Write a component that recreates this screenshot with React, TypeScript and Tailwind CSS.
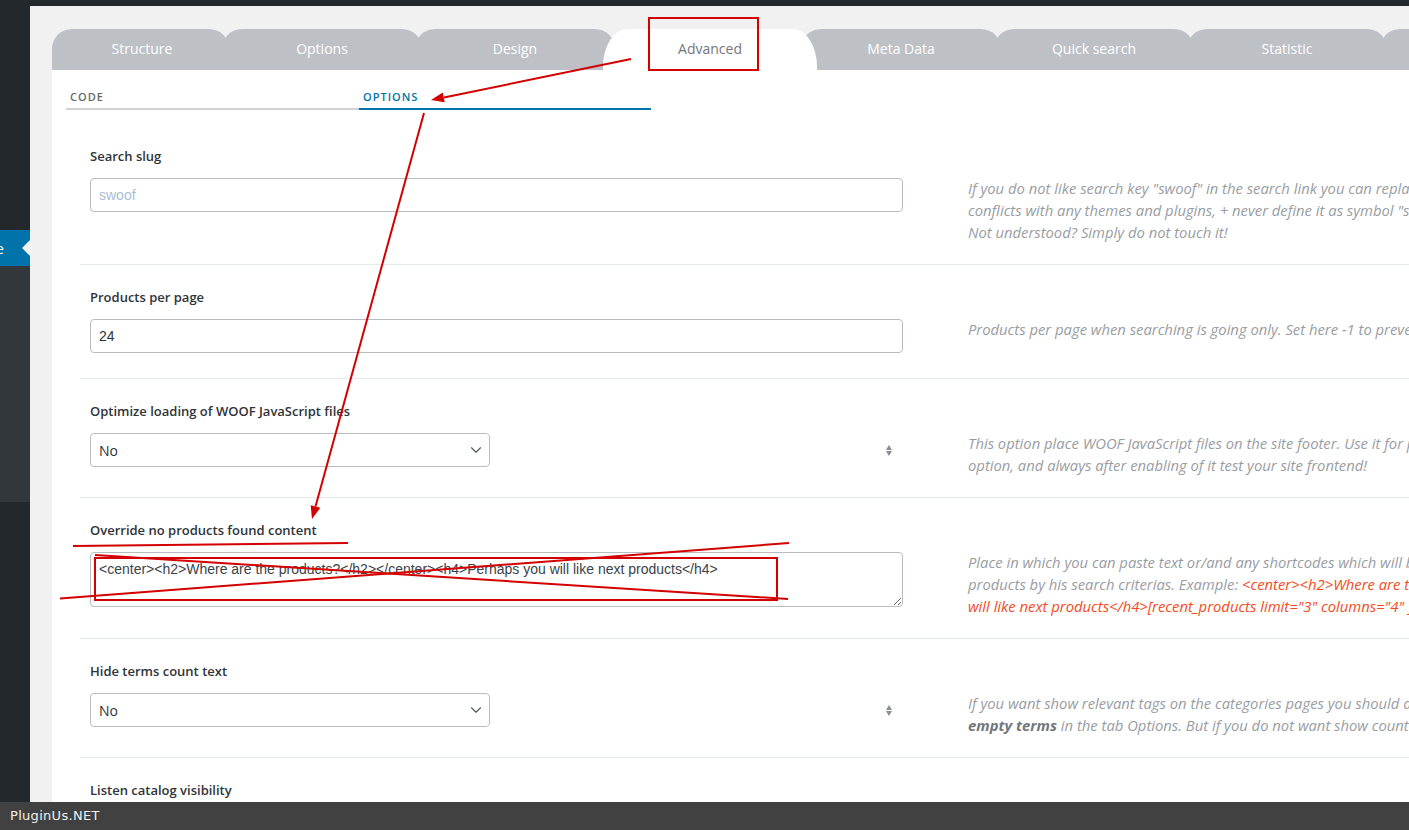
import { ChevronDown } from 'lucide-react';

const tabs = [
  { name: 'Structure', cls: 'w-[177px] pl-[3px]' },
  { name: 'Options', cls: 'w-[200px] -ml-[7px]' },
  { name: 'Design', cls: 'w-[200px] -ml-[7px]' },
  { name: 'Advanced', cls: 'w-[214px] -ml-[12px]', active: true },
  { name: 'Meta Data', cls: 'w-[200px] -ml-[16px]' },
  { name: 'Quick search', cls: 'w-[200px] -ml-[7px]' },
  { name: 'Statistic', cls: 'w-[200px] -ml-[7px]' },
  { name: '', cls: 'w-[200px] -ml-[7px]' },
];

function Label({ children }: { children: React.ReactNode }) {
  return (
    <div className="h-[20px] mb-[12px] text-[13px] leading-[20px] font-semibold text-[#2f3438]">
      {children}
    </div>
  );
}

function Spinner() {
  return (
    <div className="flex flex-col items-center gap-[1px] mr-[11px]">
      <div className="w-0 h-0 border-x-[3.5px] border-x-transparent border-b-[5px] border-b-[#8a8f94]" />
      <div className="w-0 h-0 border-x-[3.5px] border-x-transparent border-t-[5px] border-t-[#8a8f94]" />
    </div>
  );
}

function SelectBox() {
  return (
    <div className="w-[400px] h-[34px] border border-[#b8bcc0] rounded-[4px] bg-white flex items-center justify-between pl-[8px] pr-[4px] text-[14px] text-[#2c3338]">
      <span>No</span>
      <ChevronDown size={18} strokeWidth={1.5} className="text-[#50575e]" />
    </div>
  );
}

function Row({
  label,
  first,
  left,
  desc,
}: {
  label: string;
  first?: boolean;
  left: React.ReactNode;
  desc?: React.ReactNode;
}) {
  return (
    <div className={`flex ${first ? '' : 'border-t border-[#e4e9ee]'}`}>
      <div className="w-[823px] shrink-0 pl-[10px] pt-[22px] pb-[25px]">
        <Label>{label}</Label>
        {left}
      </div>
      {desc && (
        <div className="ml-[65px] pt-[53px] pb-[21px] text-[14.8px] leading-[22px] italic text-[#999da2] whitespace-nowrap">
          {desc}
        </div>
      )}
    </div>
  );
}

export default function App() {
  return (
    <div className="relative w-[1409px] h-[830px] overflow-hidden flex flex-col bg-[#f1f1f1] font-['Open_Sans',sans-serif]">
      <div className="h-[6px] shrink-0 bg-[#23282d]" />

      <div className="flex flex-1 min-h-0">
        {/* admin sidebar */}
        <div className="w-[30px] shrink-0 flex flex-col bg-[#23282d]">
          <div className="h-[224px]" />
          <div className="relative h-[36px] bg-[#0073aa] flex items-center overflow-hidden">
            <span className="-ml-[4px] text-[14px] text-white">e</span>
            <div className="absolute right-0 top-[10px] w-0 h-0 border-y-[8px] border-y-transparent border-r-[8px] border-r-[#f1f1f1]" />
          </div>
          <div className="h-[236px] bg-[#32373c]" />
        </div>

        {/* main */}
        <div className="flex-1 min-w-0 pl-[22px] pt-[23px] flex flex-col">
          <div className="flex h-[41px] shrink-0">
            {tabs.map((t) => (
              <div
                key={t.name + t.cls}
                className={`${t.cls} shrink-0 h-[41px] flex items-center justify-center text-[14px] pb-[2px] ${
                  t.active
                    ? 'relative z-10 bg-white text-[#72777c] rounded-tl-[24px_38px] rounded-tr-[24px_38px]'
                    : 'bg-[#bdc1c6] text-white rounded-tl-[20px] rounded-tr-[20px]'
                }`}
              >
                {t.name}
              </div>
            ))}
          </div>

          <div className="flex-1 bg-white min-w-[1500px]">
            {/* sub tabs */}
            <div className="flex px-[14px] pt-[19px]">
              <div className="w-[293px] pl-[4px] pb-[3px] border-b-2 border-[#cfd1d3] text-[11px] leading-[16px] font-semibold tracking-[1px] text-[#646970]">
                CODE
              </div>
              <div className="w-[292px] pl-[4px] pb-[3px] border-b-2 border-[#0073aa] text-[11px] leading-[16px] font-semibold tracking-[1px] text-[#0073aa]">
                OPTIONS
              </div>
            </div>

            <div className="ml-[28px] mt-[14px]">
              <Row
                first
                label="Search slug"
                left={
                  <div className="h-[34px] w-[813px] border border-[#b8bcc0] rounded-[4px] flex items-center px-[8px] font-['Liberation_Sans',sans-serif] text-[14px] text-[#a9bdd4]">
                    swoof
                  </div>
                }
                desc={
                  <>
                    If you do not like search key "swoof" in the search link you can replace it by your own word. But be care to avoid
                    <br />
                    conflicts with any themes and plugins, + never define it as symbol "s".
                    <br />
                    Not understood? Simply do not touch it!
                  </>
                }
              />
              <Row
                label="Products per page"
                left={
                  <div className="h-[34px] w-[813px] border border-[#b8bcc0] rounded-[4px] flex items-center px-[8px] font-['Liberation_Sans',sans-serif] text-[14px] text-[#2c3338]">
                    24
                  </div>
                }
                desc={<>Products per page when searching is going only. Set here -1 to prevent pagination managing from here!</>}
              />
              <Row
                label="Optimize loading of WOOF JavaScript files"
                left={
                  <div className="flex items-center justify-between w-[813px]">
                    <SelectBox />
                    <Spinner />
                  </div>
                }
                desc={
                  <>
                    This option place WOOF JavaScript files on the site footer. Use it for page loading optimization. Be careful in this
                    <br />
                    option, and always after enabling of it test your site frontend!
                  </>
                }
              />
              <Row
                label="Override no products found content"
                left={
                  <textarea
                    readOnly
                    defaultValue="<center><h2>Where are the products?</h2></center><h4>Perhaps you will like next products</h4>"
                    className="block w-[813px] h-[55px] border border-[#b8bcc0] rounded-[4px] px-[8px] py-[8px] font-['Liberation_Sans',sans-serif] text-[14px] leading-[16px] text-[#3c434a] outline-none"
                  />
                }
                desc={
                  <>
                    Place in which you can paste text or/and any shortcodes which will be displayed when customer will not find any
                    <br />
                    products by his search criterias. Example:{' '}
                    <span className="text-[#f44b22]">&lt;center&gt;&lt;h2&gt;Where are the products?&lt;/h2&gt;&lt;/center&gt;&lt;h4&gt;Perhaps you</span>
                    <br />
                    <span className="text-[#f44b22]">will like next products&lt;/h4&gt;[recent_products limit="3" columns="4" ]</span>
                  </>
                }
              />
              <Row
                label="Hide terms count text"
                left={
                  <div className="flex items-center justify-between w-[813px]">
                    <SelectBox />
                    <Spinner />
                  </div>
                }
                desc={
                  <>
                    If you want show relevant tags on the categories pages you should activate show count, dynamic recount and hide
                    <br />
                    <b className="font-bold text-[#72777c]">empty terms</b> in the tab Options. But if you do not want show count (number) text near each term - set Yes here.
                  </>
                }
              />
              <Row label="Listen catalog visibility" left={<div className="h-[34px]" />} />
            </div>
          </div>
        </div>
      </div>

      <div className="h-[28px] shrink-0 bg-[#414141] flex items-center pl-[10px] font-['DejaVu_Sans',sans-serif] text-[13px] tracking-[0.3px] text-[#f0f0f0]">
        PluginUs.NET
      </div>

      {/* red annotations */}
      <svg className="absolute inset-0 z-50 pointer-events-none" width="1409" height="830" viewBox="0 0 1409 830">
        <g stroke="#d40000" strokeWidth="2" fill="none">
          <rect x="649" y="18" width="109" height="52" />
          <line x1="631" y1="59" x2="444" y2="97.5" />
          <line x1="424" y1="113" x2="315.5" y2="506.5" />
          <line x1="73" y1="546" x2="348" y2="543" />
          <rect x="95" y="558" width="682" height="42" />
          <line x1="60" y1="598.5" x2="789" y2="543" />
          <line x1="95" y1="555" x2="788" y2="599" />
        </g>
        <g fill="#d40000">
          <polygon points="431,100 444.7,102.3 442.7,92.5" />
          <polygon points="312,519 320.3,507.8 310.7,505.2" />
        </g>
      </svg>
    </div>
  );
}
